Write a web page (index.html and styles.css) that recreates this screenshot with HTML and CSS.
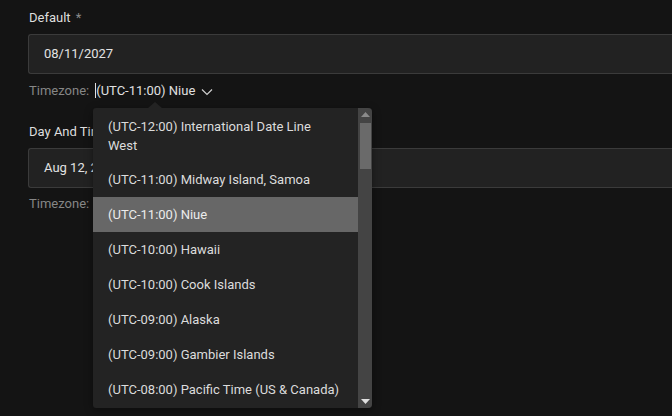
FILE: index.html
```html
<!DOCTYPE html>
<html>
<head>
<meta charset="utf-8">
<link rel="stylesheet" href="styles.css">
</head>
<body>
<div class="page">
  <div class="field">
    <div class="label">Default <span class="req">*</span></div>
    <div class="input">08/11/2027</div>
    <div class="tz">
      <span class="tz-label">Timezone:</span>
      <span class="tz-value"><span class="caret"></span>(UTC-11:00) Niue</span>
      <svg class="chev" width="12" height="8" viewBox="0 0 12 8"><path d="M1 1.5 L6 6.5 L11 1.5" fill="none" stroke="#cfcfcf" stroke-width="1.2"/></svg>
      <div class="dropdown">
        <div class="pointer"></div>
        <div class="list">
          <div class="item">(UTC-12:00) International Date Line West</div>
          <div class="item">(UTC-11:00) Midway Island, Samoa</div>
          <div class="item active">(UTC-11:00) Niue</div>
          <div class="item">(UTC-10:00) Hawaii</div>
          <div class="item">(UTC-10:00) Cook Islands</div>
          <div class="item">(UTC-09:00) Alaska</div>
          <div class="item">(UTC-09:00) Gambier Islands</div>
          <div class="item">(UTC-08:00) Pacific Time (US &amp; Canada)</div>
        </div>
        <div class="scrollbar">
          <svg class="arr" width="9" height="5" viewBox="0 0 9 5"><path d="M4.5 0 L9 5 L0 5 Z" fill="#8a8a8a"/></svg>
          <div class="thumb"></div>
          <div class="spacer"></div>
          <svg class="arr" width="9" height="5" viewBox="0 0 9 5"><path d="M0 0 L9 0 L4.5 5 Z" fill="#e0e0e0"/></svg>
        </div>
      </div>
    </div>
  </div>
  <div class="field second">
    <div class="label">Day And Time</div>
    <div class="input">Aug 12, 2027 10:00 AM</div>
    <div class="tz">
      <span class="tz-label">Timezone:</span>
      <span class="tz-value">(UTC-11:00) Niue</span>
    </div>
  </div>
</div>
</body>
</html>
```
FILE: styles.css
```css
html, body {
  margin: 0;
  padding: 0;
  background: #141414;
  height: 100%;
  overflow: hidden;
}
body {
  font-family: Roboto, "Liberation Sans", sans-serif;
  font-size: 13px;
  color: #dcdcdc;
}
.page {
  padding: 9px 0 0 28px;
  display: flex;
  flex-direction: column;
}
.field {
  display: flex;
  flex-direction: column;
}
.second {
  margin-top: 23px;
}
.label {
  line-height: 18px;
  padding-left: 1px;
  color: #dedede;
  margin-bottom: 7px;
}
.req {
  color: #8a8a8a;
  margin-left: 2px;
}
.input {
  height: 38px;
  line-height: 38px;
  border: 1px solid #3b3b3b;
  border-right: none;
  border-radius: 3px 0 0 3px;
  background: #222222;
  padding-left: 15px;
  color: #e2e2e2;
  white-space: nowrap;
  overflow: hidden;
}
.tz {
  margin-top: 8px;
  line-height: 18px;
  display: flex;
  align-items: center;
  padding-left: 1px;
  position: relative;
}
.second .tz {
  margin-top: 7px;
}
.tz-label {
  color: #868686;
  margin-right: 6px;
}
.tz-value {
  color: #e0e0e0;
  position: relative;
}
.caret {
  display: inline-block;
  width: 1px;
  height: 15px;
  background: #e0e0e0;
  vertical-align: -3px;
}
.chev {
  margin-left: 6px;
  margin-top: 1px;
}
.dropdown {
  position: absolute;
  left: 65px;
  top: 26px;
  width: 279px;
  height: 300px;
  background: #232323;
  border-radius: 3px;
  display: flex;
  z-index: 10;
  box-shadow: 0 2px 8px rgba(0,0,0,0.4);
}
.pointer {
  position: absolute;
  left: 55px;
  top: -6px;
  width: 0;
  height: 0;
  border-left: 7px solid transparent;
  border-right: 7px solid transparent;
  border-bottom: 6px solid #232323;
}
.list {
  flex: 1;
  overflow: hidden;
  border-radius: 3px 0 0 3px;
}
.item {
  padding: 7.5px 15px;
  line-height: 20px;
  color: #dcdcdc;
}
.item:first-child {
  padding-top: 8.5px;
  padding-bottom: 7.5px;
  line-height: 19px;
}
.item.active {
  background: #676767;
  color: #ececec;
}
.scrollbar {
  width: 14px;
  background: #444444;
  display: flex;
  flex-direction: column;
  align-items: center;
  border-radius: 0 4px 4px 0;
  padding: 4px 0;
  box-sizing: border-box;
}
.scrollbar .arr {
  flex: none;
}
.thumb {
  margin-top: 6px;
  width: 11px;
  height: 46px;
  background: #6a6a6a;
  margin-left: 1px;
}
.spacer {
  flex: 1;
}
```
